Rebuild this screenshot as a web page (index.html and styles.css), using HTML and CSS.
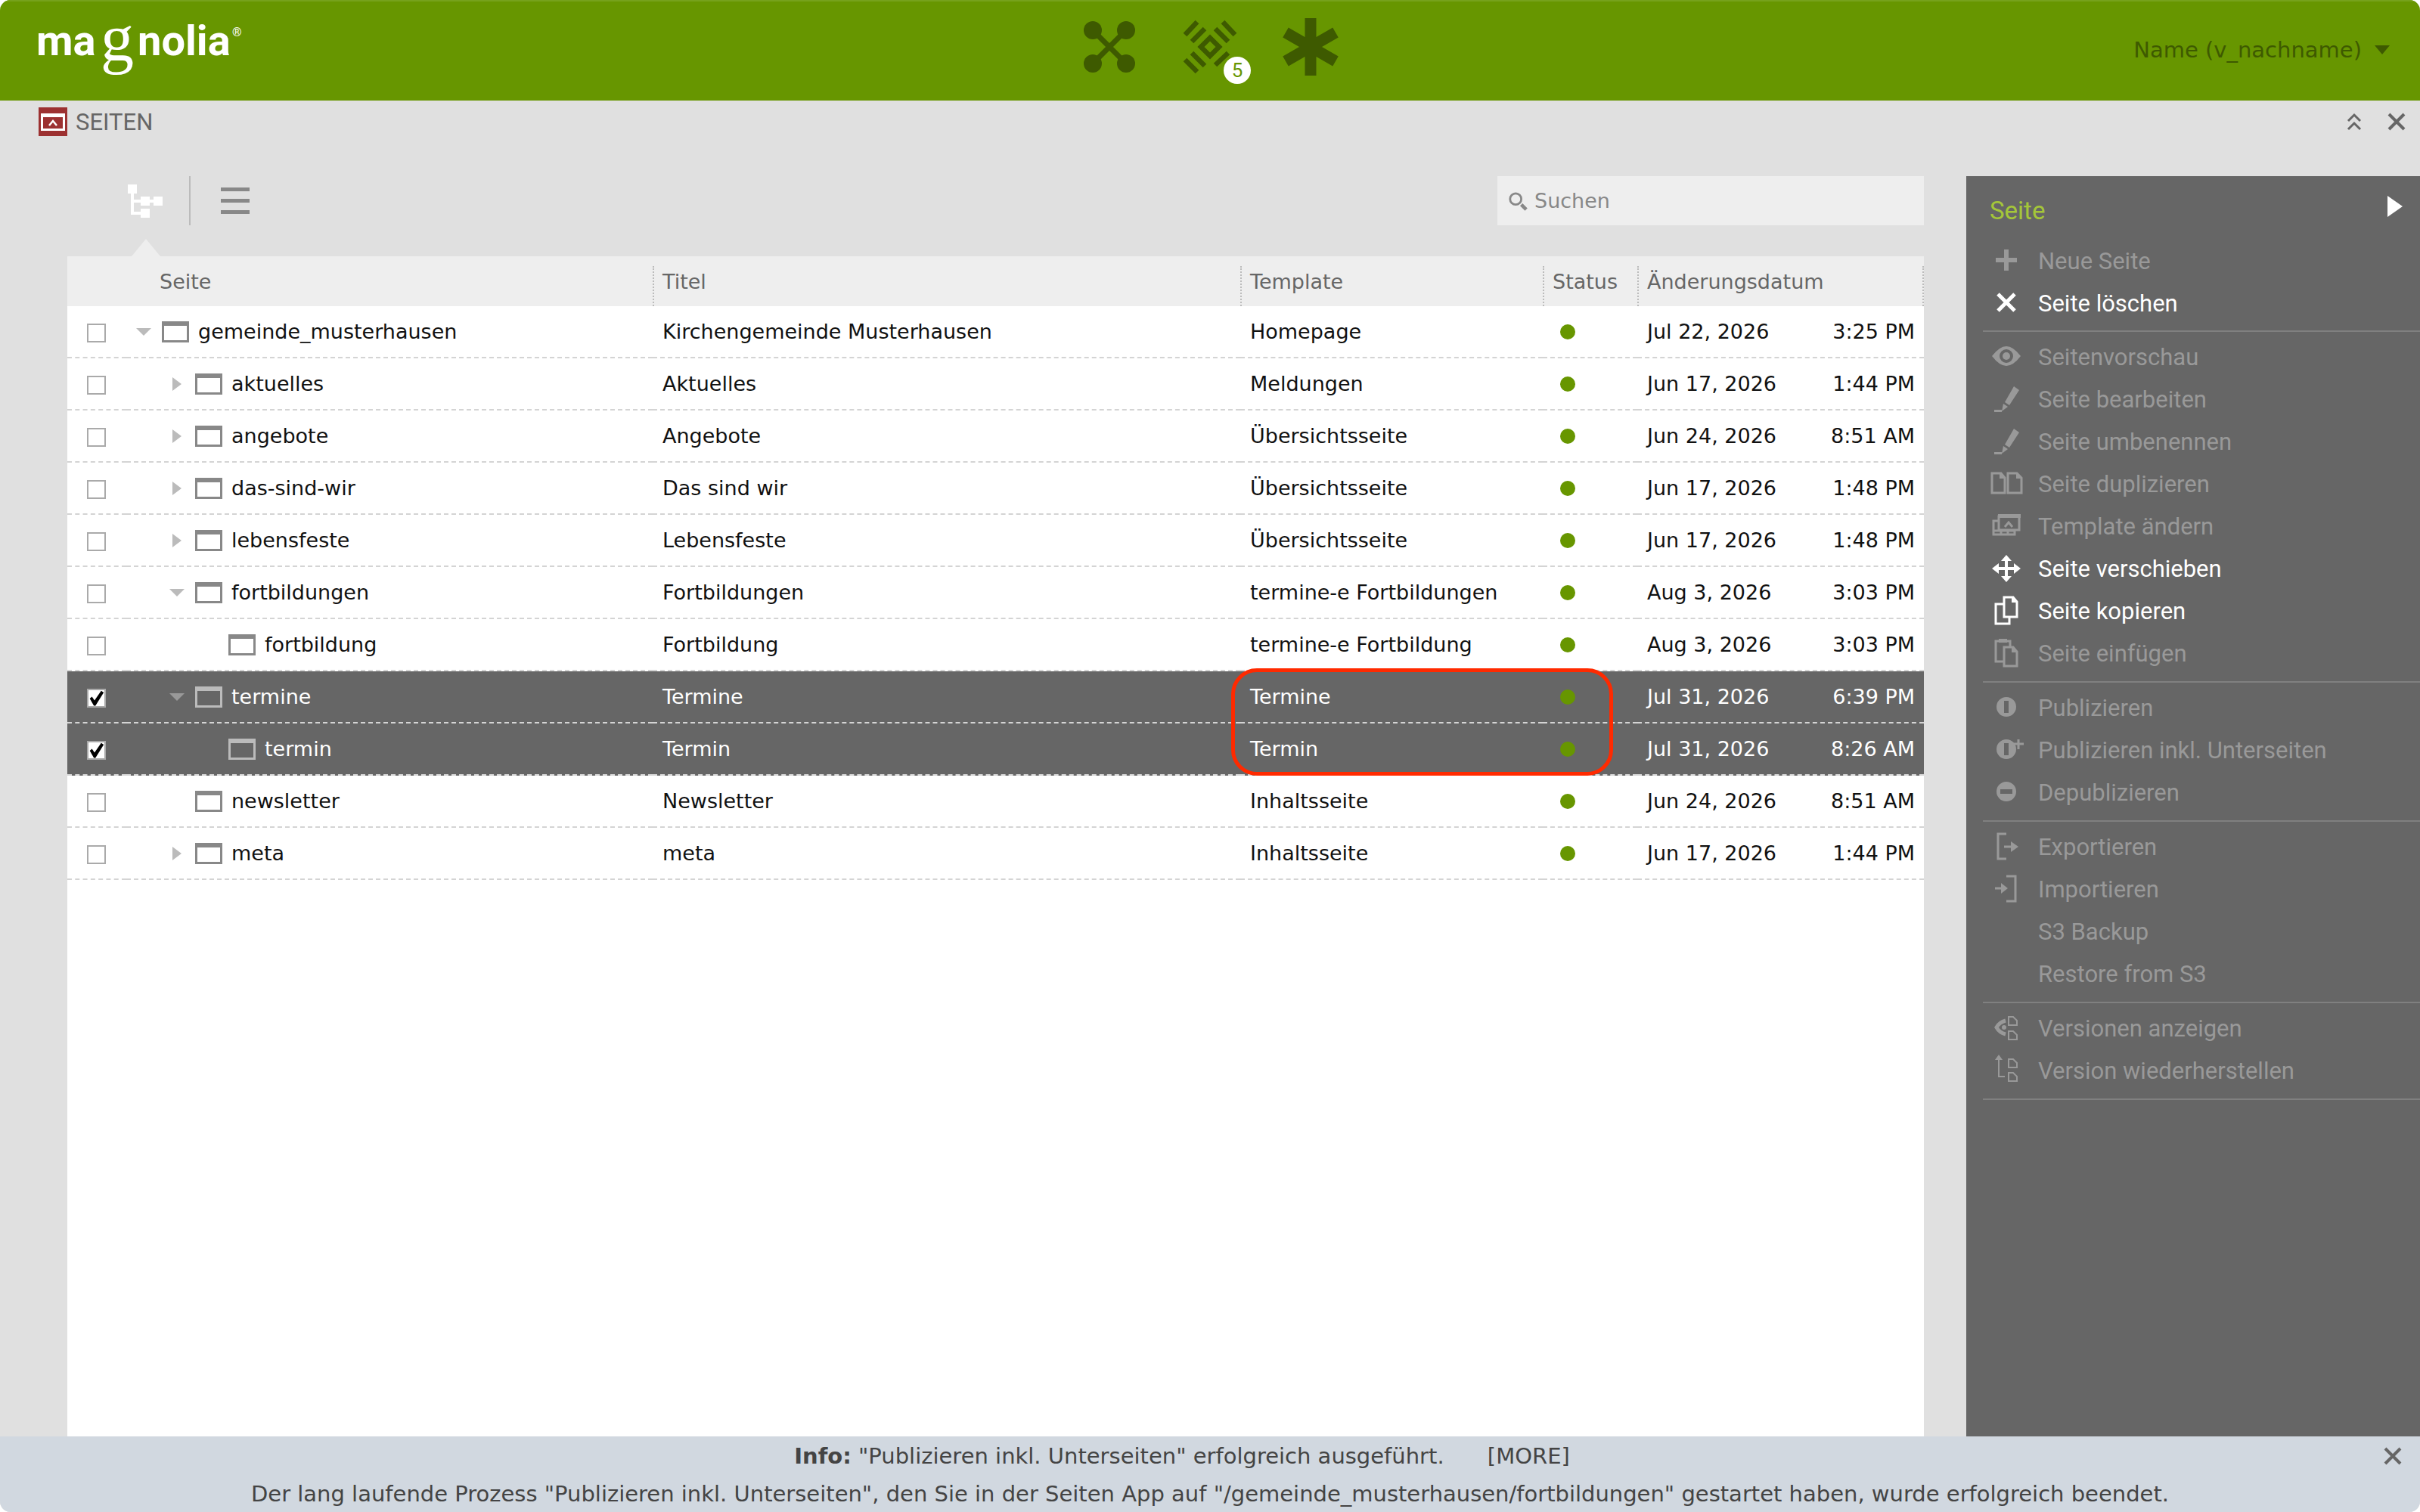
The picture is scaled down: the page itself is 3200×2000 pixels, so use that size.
FILE: index.html
```html
<!DOCTYPE html>
<html lang="de">
<head>
    <meta charset="UTF-8">
    <meta name="viewport" content="width=device-width, initial-scale=1.0">
    <title>Seiten</title>
    <link rel="stylesheet" href="styles.css">
</head>
<body>
    <svg class="symbols" aria-hidden="true">
        <symbol id="page" viewBox="0 0 36 28">
            <path fill="currentColor" fill-rule="evenodd" d="M0 0h36v28H0zM3 6v19h30V6z"/>
        </symbol>
        <symbol id="down" viewBox="0 0 20 20">
            <path fill="currentColor" d="M0 5h20L10 15z"/>
        </symbol>
        <symbol id="right" viewBox="0 0 20 20">
            <path fill="currentColor" d="M4 1l12 9-12 9z"/>
        </symbol>
        <symbol id="pencil" viewBox="0 0 62 56">
            <path fill="currentColor" d="M41 11l7 5-13 20-6-4zM27 34l6 4-8 6zM15 42h10v3H15z"/>
        </symbol>
        <symbol id="close" viewBox="0 0 24 24">
            <path fill="none" stroke="currentColor" stroke-width="4" d="M2 2l20 20M22 2L2 22"/>
        </symbol>
    </svg>

    <div class="window">
        <header class="topbar">
            <svg class="logo" viewBox="0 0 290 133" role="img" aria-label="magnolia">
                <text class="logo-sans" x="8" y="73">ma</text>
                <text class="logo-serif" x="93" y="80">g</text>
                <text class="logo-sans" x="142" y="73">nolia</text>
                <text class="logo-mark" x="267" y="48">®</text>
            </svg>
            <nav class="shell">
                <button class="shell-button" aria-label="Apps">
                    <svg viewBox="0 0 80 80">
                        <g fill="none" stroke="currentColor" stroke-width="7"><path d="M18 18l44 44M62 18L18 62"/></g>
                        <g fill="currentColor"><circle cx="18" cy="18" r="12"/><circle cx="62" cy="18" r="12"/><circle cx="18" cy="62" r="12"/><circle cx="62" cy="62" r="12"/></g>
                    </svg>
                </button>
                <button class="shell-button" aria-label="Pulse">
                    <svg viewBox="0 0 80 80">
                        <g fill="none" stroke="currentColor" stroke-width="6.5">
                            <path d="M40 28l12 12-12 12-12-12z"/>
                            <path d="M7 24L23 7M16 33l17-17M57 7l16 17M47 16l17 17M7 57l16 16M16 48l17 17M47 64l17-16"/>
                        </g>
                    </svg>
                    <span class="badge">5</span>
                </button>
                <button class="shell-button" aria-label="Favoriten">
                    <svg viewBox="0 0 80 80">
                        <path fill="none" stroke="currentColor" stroke-width="15" d="M40 2v76M7 21l66 38M73 21L7 59"/>
                    </svg>
                </button>
            </nav>
            <button class="user">Name (v_nachname) <svg viewBox="0 0 20 12"><path fill="currentColor" d="M0 0h20L10 12z"/></svg></button>
        </header>

        <div class="app-title">
            <svg class="app-icon" viewBox="0 0 38 38">
                <path fill="#9c3131" d="M0 0h38v38H0z"/>
                <path fill="#fff" fill-rule="evenodd" d="M3 8h32v23H3zM6 13v15h26V13z"/>
                <path fill="none" stroke="#fff" stroke-width="2.5" d="M14 24l5-6 5 6"/>
            </svg>
            <h1>SEITEN</h1>
            <div class="window-tools">
                <button aria-label="Maximieren"><svg viewBox="0 0 24 24"><path fill="none" stroke="currentColor" stroke-width="3" d="M4 11l8-8 8 8M4 22l8-8 8 8"/></svg></button>
                <button aria-label="Schließen"><svg><use href="#close"/></svg></button>
            </div>
        </div>

        <div class="columns">
            <main class="browser">
                <div class="toolbar">
                    <button class="view active" aria-label="Baumansicht">
                        <svg viewBox="0 0 46 44">
                            <g fill="currentColor"><path d="M0 0h12v12H0zM17 16h12v12H17zM34 16h12v12H34zM17 32h12v12H17z"/><path d="M4 12h4v24h9v4H4zM8 20h30v4H8z"/></g>
                        </svg>
                    </button>
                    <button class="view" aria-label="Listenansicht">
                        <svg viewBox="0 0 46 44"><path fill="currentColor" d="M4 4h38v5H4zM4 19h38v5H4zM4 34h38v5H4z"/></svg>
                    </button>
                    <label class="search">
                        <svg viewBox="0 0 28 28"><g fill="none" stroke="currentColor"><circle cx="11" cy="11" r="8" stroke-width="3"/><path stroke-width="5" d="M19 19l7 7"/></g></svg>
                        <input type="text" placeholder="Suchen" aria-label="Suchen">
                    </label>
                </div>

                <table class="pages">
                    <colgroup>
                        <col class="col-check">
                        <col class="col-page">
                        <col>
                        <col class="col-template">
                        <col class="col-status">
                        <col class="col-date">
                    </colgroup>
                    <thead>
                        <tr>
                            <th></th>
                            <th class="first"><div>Seite</div></th>
                            <th><div>Titel</div></th>
                            <th><div>Template</div></th>
                            <th><div>Status</div></th>
                            <th class="last"><div>Änderungsdatum</div></th>
                        </tr>
                    </thead>
                    <tbody>
                        <tr>
                            <td><input type="checkbox" aria-label="gemeinde_musterhausen"></td>
                            <td><div class="node"><button class="toggle" aria-label="Zuklappen"><svg><use href="#down"/></svg></button><svg class="page"><use href="#page"/></svg>gemeinde_musterhausen</div></td>
                            <td>Kirchengemeinde Musterhausen</td>
                            <td>Homepage</td>
                            <td><span class="dot"></span></td>
                            <td><div class="date"><span>Jul 22, 2026</span><span>3:25 PM</span></div></td>
                        </tr>
                        <tr>
                            <td><input type="checkbox" aria-label="aktuelles"></td>
                            <td><div class="node level1"><button class="toggle" aria-label="Aufklappen"><svg><use href="#right"/></svg></button><svg class="page"><use href="#page"/></svg>aktuelles</div></td>
                            <td>Aktuelles</td>
                            <td>Meldungen</td>
                            <td><span class="dot"></span></td>
                            <td><div class="date"><span>Jun 17, 2026</span><span>1:44 PM</span></div></td>
                        </tr>
                        <tr>
                            <td><input type="checkbox" aria-label="angebote"></td>
                            <td><div class="node level1"><button class="toggle" aria-label="Aufklappen"><svg><use href="#right"/></svg></button><svg class="page"><use href="#page"/></svg>angebote</div></td>
                            <td>Angebote</td>
                            <td>Übersichtsseite</td>
                            <td><span class="dot"></span></td>
                            <td><div class="date"><span>Jun 24, 2026</span><span>8:51 AM</span></div></td>
                        </tr>
                        <tr>
                            <td><input type="checkbox" aria-label="das-sind-wir"></td>
                            <td><div class="node level1"><button class="toggle" aria-label="Aufklappen"><svg><use href="#right"/></svg></button><svg class="page"><use href="#page"/></svg>das-sind-wir</div></td>
                            <td>Das sind wir</td>
                            <td>Übersichtsseite</td>
                            <td><span class="dot"></span></td>
                            <td><div class="date"><span>Jun 17, 2026</span><span>1:48 PM</span></div></td>
                        </tr>
                        <tr>
                            <td><input type="checkbox" aria-label="lebensfeste"></td>
                            <td><div class="node level1"><button class="toggle" aria-label="Aufklappen"><svg><use href="#right"/></svg></button><svg class="page"><use href="#page"/></svg>lebensfeste</div></td>
                            <td>Lebensfeste</td>
                            <td>Übersichtsseite</td>
                            <td><span class="dot"></span></td>
                            <td><div class="date"><span>Jun 17, 2026</span><span>1:48 PM</span></div></td>
                        </tr>
                        <tr>
                            <td><input type="checkbox" aria-label="fortbildungen"></td>
                            <td><div class="node level1"><button class="toggle" aria-label="Zuklappen"><svg><use href="#down"/></svg></button><svg class="page"><use href="#page"/></svg>fortbildungen</div></td>
                            <td>Fortbildungen</td>
                            <td>termine-e Fortbildungen</td>
                            <td><span class="dot"></span></td>
                            <td><div class="date"><span>Aug 3, 2026</span><span>3:03 PM</span></div></td>
                        </tr>
                        <tr>
                            <td><input type="checkbox" aria-label="fortbildung"></td>
                            <td><div class="node level2"><span class="toggle"></span><svg class="page"><use href="#page"/></svg>fortbildung</div></td>
                            <td>Fortbildung</td>
                            <td>termine-e Fortbildung</td>
                            <td><span class="dot"></span></td>
                            <td><div class="date"><span>Aug 3, 2026</span><span>3:03 PM</span></div></td>
                        </tr>
                        <tr class="selected">
                            <td><input type="checkbox" aria-label="termine" checked></td>
                            <td><div class="node level1"><button class="toggle" aria-label="Zuklappen"><svg><use href="#down"/></svg></button><svg class="page"><use href="#page"/></svg>termine</div></td>
                            <td>Termine</td>
                            <td class="marked">Termine<span class="marker"></span></td>
                            <td><span class="dot"></span></td>
                            <td><div class="date"><span>Jul 31, 2026</span><span>6:39 PM</span></div></td>
                        </tr>
                        <tr class="selected">
                            <td><input type="checkbox" aria-label="termin" checked></td>
                            <td><div class="node level2"><span class="toggle"></span><svg class="page"><use href="#page"/></svg>termin</div></td>
                            <td>Termin</td>
                            <td>Termin</td>
                            <td><span class="dot"></span></td>
                            <td><div class="date"><span>Jul 31, 2026</span><span>8:26 AM</span></div></td>
                        </tr>
                        <tr>
                            <td><input type="checkbox" aria-label="newsletter"></td>
                            <td><div class="node level1"><span class="toggle"></span><svg class="page"><use href="#page"/></svg>newsletter</div></td>
                            <td>Newsletter</td>
                            <td>Inhaltsseite</td>
                            <td><span class="dot"></span></td>
                            <td><div class="date"><span>Jun 24, 2026</span><span>8:51 AM</span></div></td>
                        </tr>
                        <tr>
                            <td><input type="checkbox" aria-label="meta"></td>
                            <td><div class="node level1"><button class="toggle" aria-label="Aufklappen"><svg><use href="#right"/></svg></button><svg class="page"><use href="#page"/></svg>meta</div></td>
                            <td>meta</td>
                            <td>Inhaltsseite</td>
                            <td><span class="dot"></span></td>
                            <td><div class="date"><span>Jun 17, 2026</span><span>1:44 PM</span></div></td>
                        </tr>
                    </tbody>
                </table>
                <div class="empty"></div>
            </main>

            <aside class="actionbar">
                <div class="actionbar-head">
                    <h2>Seite</h2>
                    <button aria-label="Leiste einklappen"><svg viewBox="0 0 20 28"><path fill="currentColor" d="M0 0l20 14L0 28z"/></svg></button>
                </div>
                <div class="group">
                    <button disabled><svg viewBox="0 0 62 56"><path fill="currentColor" d="M28 13h6v11h11v6H34v11h-6V30H17v-6h11z"/></svg>Neue Seite</button>
                    <button><svg viewBox="0 0 62 56"><path fill="none" stroke="currentColor" stroke-width="5" d="M20 16l22 22M42 16L20 38"/></svg>Seite löschen</button>
                </div>
                <div class="group">
                    <button disabled><svg viewBox="0 0 62 56"><path fill="currentColor" fill-rule="evenodd" d="M12 27Q22 14 31 14T50 27Q40 40 31 40T12 27zM31 18a9 9 0 1 0 0 18 9 9 0 0 0 0-18z"/><circle cx="31" cy="27" r="5" fill="currentColor"/></svg>Seitenvorschau</button>
                    <button disabled><svg><use href="#pencil"/></svg>Seite bearbeiten</button>
                    <button disabled><svg><use href="#pencil"/></svg>Seite umbenennen</button>
                    <button disabled><svg viewBox="0 0 62 56"><g fill="none" stroke="currentColor" stroke-width="3"><path d="M12 14h12l5 6v20H12zM33 14h12l6 6v20H33z"/></g><path fill="currentColor" d="M22 13l8 8h-8zM44 13l8 8h-8z"/></svg>Seite duplizieren</button>
                    <button disabled><svg viewBox="0 0 62 56"><g fill="none" stroke="currentColor" stroke-width="3"><path d="M21 15h27v18H21zM20 21h-6v18h28v-5M14 34h28M24 34v5M33 34v5"/><path d="M29 29l5-6 5 6"/></g><path fill="currentColor" d="M20 12h30v5H20z"/></svg>Template ändern</button>
                    <button><svg viewBox="0 0 62 56"><path fill="currentColor" d="M31 10l7 8h-5v8h8v-5l9 7-9 7v-5h-8v8h5l-7 8-7-8h5v-8h-8v5l-9-7 9-7v5h8v-8h-5z"/></svg>Seite verschieben</button>
                    <button><svg viewBox="0 0 62 56"><g fill="none" stroke="currentColor" stroke-width="3"><path d="M28 10h12l5 6v20H28zM27 19H17v26h18v-8"/></g><path fill="currentColor" d="M38 9l8 8h-8z"/></svg>Seite kopieren</button>
                    <button disabled><svg viewBox="0 0 62 56"><g fill="none" stroke="currentColor" stroke-width="3"><path d="M28 20h12l5 6v19H28zM27 39H17V12h19v7"/></g><path fill="currentColor" d="M38 19l8 8h-8zM21 9h11v5H21z"/></svg>Seite einfügen</button>
                </div>
                <div class="group">
                    <button disabled><svg viewBox="0 0 62 56"><path fill="currentColor" fill-rule="evenodd" d="M31 14a13 13 0 1 0 0 26 13 13 0 0 0 0-26zM28 19h6v16h-6z"/></svg>Publizieren</button>
                    <button disabled><svg viewBox="0 0 62 56"><path fill="currentColor" fill-rule="evenodd" d="M31 14a13 13 0 1 0 0 26 13 13 0 0 0 0-26zM28 19h6v16h-6z"/><path stroke="currentColor" stroke-width="3" d="M47 14v13M40 20h14"/></svg>Publizieren inkl. Unterseiten</button>
                    <button disabled><svg viewBox="0 0 62 56"><path fill="currentColor" fill-rule="evenodd" d="M31 14a13 13 0 1 0 0 26 13 13 0 0 0 0-26zM23 24h16v6H23z"/></svg>Depublizieren</button>
                </div>
                <div class="group">
                    <button disabled><svg viewBox="0 0 62 56"><path fill="none" stroke="currentColor" stroke-width="3" d="M31 11H20v33h11M28 28h10"/><path fill="currentColor" d="M37 21l10 7-10 7z"/></svg>Exportieren</button>
                    <button disabled><svg viewBox="0 0 62 56"><path fill="none" stroke="currentColor" stroke-width="3" d="M31 11h12v33H31M16 27h10"/><path fill="currentColor" d="M24 20l9 7-9 7z"/></svg>Importieren</button>
                    <button disabled><span class="no-icon"></span>S3 Backup</button>
                    <button disabled><span class="no-icon"></span>Restore from S3</button>
                </div>
                <div class="group">
                    <button disabled><svg viewBox="0 0 62 56"><g fill="none" stroke="currentColor"><path stroke-width="5" d="M30 18Q22 20 18 27q4 7 12 9"/><path stroke-width="2" d="M34 13h6l5 5v6H34zM34 32h6l5 5v6H34z"/></g><circle cx="28" cy="27" r="3" fill="currentColor"/></svg>Versionen anzeigen</button>
                    <button disabled><svg viewBox="0 0 62 56"><g fill="none" stroke="currentColor" stroke-width="2"><path d="M21 12v24h8M34 13h6l5 5v6H34zM34 31h6l5 5v6H34z"/></g><path fill="currentColor" d="M21 7l5 7h-10z"/></svg>Version wiederherstellen</button>
                </div>
            </aside>
        </div>

        <footer class="message">
            <p class="headline"><strong>Info:</strong> "Publizieren inkl. Unterseiten" erfolgreich ausgeführt. <button class="more">[MORE]</button></p>
            <p>Der lang laufende Prozess "Publizieren inkl. Unterseiten", den Sie in der Seiten App auf "/gemeinde_musterhausen/fortbildungen" gestartet haben, wurde erfolgreich beendet.</p>
            <button class="dismiss" aria-label="Meldung schließen"><svg><use href="#close"/></svg></button>
        </footer>
    </div>
</body>
</html>
```
FILE: styles.css
```css
* {
    box-sizing: border-box;
}
body {
    margin: 0;
    background: #fff;
    color: #111;
    font-family: "DejaVu Sans", Verdana, sans-serif;
    font-size: 27px;
}
button {
    padding: 0;
    border: 0;
    background: none;
    color: inherit;
    font: inherit;
}
svg {
    display: block;
}
.symbols {
    position: absolute;
    width: 0;
    height: 0;
}
.window {
    display: flex;
    flex-direction: column;
    min-height: 100vh;
    border-radius: 14px;
    overflow: hidden;
    background: #e0e0e0;
}

/* top bar */
.topbar {
    display: grid;
    grid-template-columns: 1fr auto 1fr;
    height: 133px;
    padding: 0 40px;
    background: #679600;
    box-shadow: inset 0 2px #76a21c;
    color: #3e5a00;
}
.logo {
    width: 290px;
    height: 133px;
    overflow: visible;
    fill: #fff;
}
.logo-sans {
    font: 700 56px Roboto, sans-serif;
}
.logo-serif {
    font: 88px "Liberation Serif", serif;
}
.logo-mark {
    font: 16px Roboto, sans-serif;
}
.shell {
    display: flex;
    gap: 53px;
    padding-top: 22px;
}
.shell-button {
    position: relative;
    width: 80px;
    height: 80px;
}
.badge {
    position: absolute;
    left: 58px;
    top: 53px;
    width: 36px;
    height: 36px;
    border-radius: 50%;
    background: #fff;
    color: #679600;
    font: 26px/36px Roboto, sans-serif;
}
.user {
    display: flex;
    align-items: center;
    justify-self: end;
    gap: 17px;
    height: 131px;
    font-size: 29px;
}
.user svg {
    width: 20px;
    height: 12px;
}

/* app title */
.app-title {
    display: flex;
    align-items: center;
    gap: 11px;
    height: 56px;
    padding: 0 19px 0 51px;
    color: #666;
}
.app-icon {
    width: 38px;
    height: 38px;
}
h1 {
    margin: 0;
    font: 31px Roboto, sans-serif;
}
.window-tools {
    display: flex;
    gap: 32px;
    margin-left: auto;
}
.window-tools svg,
.dismiss svg {
    width: 24px;
    height: 24px;
}

.columns {
    flex: 1;
    display: grid;
    grid-template-columns: 1fr 600px;
    gap: 56px;
    padding: 44px 0 0 89px;
}
.browser {
    display: flex;
    flex-direction: column;
}

/* toolbar */
.toolbar {
    display: flex;
    height: 65px;
    margin-bottom: 41px;
    padding-left: 45px;
}
.view {
    position: relative;
    display: flex;
    align-items: center;
    justify-content: center;
    width: 118px;
    color: #888;
}
.view svg {
    width: 46px;
    height: 44px;
}
.view.active {
    border-right: 2px solid #bbb;
    color: #fff;
}
.view.active::after {
    content: "";
    position: absolute;
    left: 40px;
    bottom: -41px;
    border: 19px solid transparent;
    border-top-width: 0;
    border-bottom: 23px solid #eee;
}
.search {
    display: flex;
    align-items: center;
    gap: 9px;
    width: 564px;
    margin-left: auto;
    padding-left: 14px;
    background: #eee;
    color: #888;
}
.search svg {
    width: 26px;
    height: 26px;
}
.search input {
    flex: 1;
    min-width: 0;
    padding: 0;
    border: 0;
    background: none;
    font: inherit;
}
.search input::placeholder {
    color: #888;
}

/* page tree */
.pages {
    width: 100%;
    table-layout: fixed;
    border-collapse: separate;
    border-spacing: 0;
    background: #fff;
}
.col-check {
    width: 78px;
}
.col-page {
    width: 696px;
}
.col-template {
    width: 400px;
}
.col-status {
    width: 125px;
}
.col-date {
    width: 379px;
}
.pages th {
    height: 66px;
    padding: 0;
    background: #eee;
    color: #666;
    font-weight: normal;
    text-align: left;
    vertical-align: bottom;
}
.pages th div {
    height: 53px;
    padding-left: 11px;
    border-left: 2px dotted #bbb;
    line-height: 41px;
}
.pages th.first div {
    padding-left: 44px;
    border-left: 0;
}
.pages th.last div {
    border-right: 2px dotted #bbb;
}
.pages td {
    height: 69px;
    padding: 0 12px 0 13px;
    border-bottom: 2px dashed #d4d4d4;
    white-space: nowrap;
}
.pages td:first-child {
    padding-left: 26px;
}
.node {
    display: flex;
    align-items: center;
}
.level1 {
    padding-left: 44px;
}
.level2 {
    padding-left: 88px;
}
.toggle {
    width: 20px;
    height: 20px;
    margin-right: 14px;
    color: #bbb;
}
.toggle svg {
    width: 20px;
    height: 20px;
}
.page {
    width: 36px;
    height: 28px;
    margin-right: 12px;
    color: #888;
}
.pages input {
    appearance: none;
    display: block;
    width: 25px;
    height: 25px;
    margin: 4px 0 0;
    border: 2px solid #aaa;
    background: #fff;
}
.pages input:checked::before {
    content: "";
    display: block;
    height: 21px;
    background: #000;
    clip-path: polygon(8% 52%, 22% 40%, 38% 64%, 80% 4%, 96% 14%, 44% 98%, 34% 98%);
}
.dot {
    display: block;
    width: 20px;
    height: 20px;
    margin-left: 10px;
    border-radius: 50%;
    background: #679600;
}
.date {
    display: flex;
    justify-content: space-between;
}
.selected {
    background: #666;
    color: #fff;
}
.selected .page {
    color: #bbb;
}
.selected .toggle {
    color: #999;
}
.marked {
    position: relative;
}
.marker {
    position: absolute;
    z-index: 1;
    left: -12px;
    top: -4px;
    width: 505px;
    height: 142px;
    border: 5px solid #ff2a00;
    border-radius: 34px;
}
.empty {
    flex: 1;
    background: #fff;
}

/* action bar */
.actionbar {
    padding-left: 22px;
    background: #666;
    color: #fff;
}
.actionbar-head {
    display: flex;
    justify-content: space-between;
    height: 84px;
    padding: 26px 23px 0 9px;
}
.actionbar-head svg {
    width: 20px;
    height: 28px;
}
.actionbar-head button {
    height: 28px;
}
h2 {
    margin: 0;
    color: #a4c639;
    font: 33px/40px Roboto, sans-serif;
}
.group {
    padding: 5px 0 9px;
    border-bottom: 2px solid #808080;
}
.actionbar-head + .group {
    padding: 0 0 8px;
}
.group button {
    display: flex;
    align-items: center;
    gap: 11px;
    width: 100%;
    height: 56px;
    font: 31px Roboto, sans-serif;
}
.group button:disabled {
    color: #999;
}
.group svg,
.no-icon {
    width: 62px;
    height: 56px;
}

/* message */
.message {
    position: relative;
    height: 100px;
    background: #d1d8e0;
    color: #444;
    font-size: 29px;
    line-height: 52px;
    text-align: center;
}
.message p {
    margin: 0;
    height: 50px;
}
.headline {
    padding-right: 74px;
}
.more {
    margin-left: 48px;
}
.dismiss {
    position: absolute;
    right: 24px;
    top: 14px;
    height: 24px;
    color: #666;
}
```
